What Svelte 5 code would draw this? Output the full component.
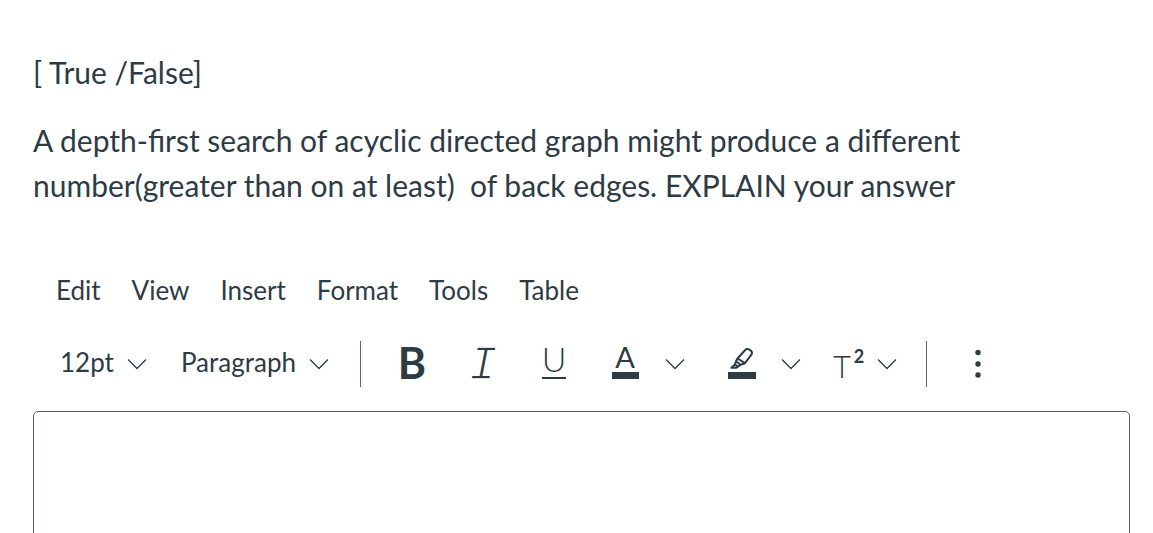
<script lang="ts">
	const menus = ['Edit', 'View', 'Insert', 'Format', 'Tools', 'Table'];
	const sizes = ['12pt', '14pt', '18pt', '24pt'];
	const blocks = ['Paragraph', 'Heading 2', 'Heading 3', 'Preformatted'];

	let size = $state('12pt');
	let block = $state('Paragraph');
	let answer = $state('');
</script>

{#snippet chevron()}
	<svg class="chevron" width="20" height="12" viewBox="0 0 20 12" aria-hidden="true">
		<path d="M1 1.5 10 10.5 19 1.5" />
	</svg>
{/snippet}

<main>
	<section class="question">
		<p>[ True /False]</p>
		<p>
			A depth-first search of acyclic directed graph might produce a different
			number(greater than on at least)&nbsp; of back edges. EXPLAIN your answer
		</p>
	</section>

	<section class="editor">
		<nav class="menubar">
			{#each menus as menu}
				<button type="button">{menu}</button>
			{/each}
		</nav>

		<div class="toolbar" role="toolbar" aria-label="Formatting">
			<div class="selects">
				<label class="picker">
					<select bind:value={size} aria-label="Font size">
						{#each sizes as option}
							<option>{option}</option>
						{/each}
					</select>
					{@render chevron()}
				</label>
				<label class="picker">
					<select bind:value={block} aria-label="Block style">
						{#each blocks as option}
							<option>{option}</option>
						{/each}
					</select>
					{@render chevron()}
				</label>
			</div>

			<span class="divider"></span>

			<div class="tools">
				<div class="group">
					<button type="button" class="tool" aria-label="Bold">
						<svg width="32" height="32" viewBox="0 0 32 32">
							<text class="bold" x="16" y="31">B</text>
						</svg>
					</button>
					<button type="button" class="tool" aria-label="Italic">
						<svg width="32" height="32" viewBox="0 0 32 32">
							<text class="italic" x="16" y="31">I</text>
						</svg>
					</button>
					<button type="button" class="tool" aria-label="Underline">
						<svg width="32" height="32" viewBox="0 0 32 32">
							<text class="under" x="16" y="24">U</text>
							<rect x="4" y="29" width="24" height="2" />
						</svg>
					</button>
					<button type="button" class="tool" aria-label="Text color">
						<svg width="32" height="32" viewBox="0 0 32 32">
							<text class="color" x="16" y="20">A</text>
							<rect x="3" y="24" width="27" height="7" />
						</svg>
					</button>
					<button type="button" class="more" aria-label="Text color options">
						{@render chevron()}
					</button>
				</div>
				<div class="group">
					<button type="button" class="tool" aria-label="Highlight">
						<svg width="32" height="32" viewBox="0 0 32 32">
							<g class="pen">
								<path
									d="M12.5 10.5 20.2 2C22.4-.2 28.4 2.4 26.6 6.4L20 15.2 15.6 16.8 11 13.2ZM12.5 10.5 20 15.2"
								/>
								<path d="M11 13.2 10 16.4 6.4 19.8H11L15.6 16.8" />
								<path d="M10 16.4 12.6 18.6" />
							</g>
							<rect x="3" y="24" width="28" height="7" />
						</svg>
					</button>
					<button type="button" class="more" aria-label="Highlight options">
						{@render chevron()}
					</button>
				</div>
				<div class="group">
					<button type="button" class="tool narrow" aria-label="Superscript">
						<svg width="32" height="32" viewBox="0 0 32 32">
							<text class="base" x="11" y="30">T</text>
							<text class="power" x="28" y="15">2</text>
						</svg>
					</button>
					<button type="button" class="more" aria-label="Superscript and subscript">
						{@render chevron()}
					</button>
				</div>
			</div>

			<span class="divider"></span>

			<button type="button" class="overflow" aria-label="More">
				<svg width="8" height="32" viewBox="0 0 8 32">
					<circle cx="4" cy="4.5" r="2.7" />
					<circle cx="4" cy="16" r="2.7" />
					<circle cx="4" cy="27" r="2.7" />
				</svg>
			</button>
		</div>

		<textarea bind:value={answer} aria-label="Answer"></textarea>
	</section>
</main>

<style>
	:global(body) {
		margin: 0;
		background: #fff;
	}

	main {
		box-sizing: border-box;
		height: 100vh;
		overflow: hidden;
		padding: 50px 23px 0 33px;
		color: #2d3b45;
		font-family: Lato, 'Liberation Sans', sans-serif;
	}

	.question {
		max-width: 960px;
		font-size: 30px;
		line-height: 45px;
	}

	p {
		margin: 0 0 23px;
	}

	button,
	select {
		margin: 0;
		padding: 0;
		border: none;
		background: none;
		color: inherit;
		cursor: pointer;
		font-family: inherit;
		font-size: 26px;
		line-height: 32px;
	}

	.menubar {
		display: flex;
		gap: 31px;
		padding: 43px 23px 0;
	}

	.toolbar {
		display: flex;
		align-items: center;
		padding: 35px 27px 24px;
	}

	.selects {
		display: flex;
		gap: 34px;
		margin-right: 31px;
	}

	.picker {
		display: grid;
		align-items: center;
	}

	.picker select,
	.picker .chevron {
		grid-area: 1 / 1;
	}

	.picker select {
		appearance: none;
		field-sizing: content;
		padding: 0 33px 4px 0;
	}

	.picker .chevron {
		justify-self: end;
		pointer-events: none;
	}

	.divider {
		width: 1px;
		height: 46px;
		background: #566775;
	}

	.tools {
		display: flex;
		gap: 17px;
		margin: 0 25px 0 16px;
	}

	.group {
		display: flex;
	}

	.tool,
	.more,
	.overflow {
		display: grid;
		place-items: center;
	}

	.tool {
		width: 71px;
	}

	.narrow {
		width: 51px;
	}

	.more {
		width: 28px;
	}

	.overflow {
		margin-left: 47px;
	}

	svg {
		display: block;
		overflow: visible;
		fill: currentColor;
	}

	.chevron,
	.pen {
		fill: none;
		stroke: currentColor;
	}

	.chevron {
		stroke-width: 1.3;
	}

	.pen {
		stroke-linejoin: round;
		stroke-width: 2;
	}

	text {
		text-anchor: middle;
	}

	.bold {
		font-size: 43px;
		font-weight: 700;
	}

	/* the white outline thins the slab strokes */
	.italic {
		font-family: 'Liberation Mono', monospace;
		font-size: 48px;
		font-style: italic;
		stroke: #fff;
		stroke-width: 1.5;
	}

	.under {
		font-size: 34px;
		font-weight: 300;
	}

	.color {
		font-size: 29px;
	}

	.base {
		font-size: 31px;
		font-weight: 300;
	}

	.power {
		font-size: 18px;
		font-weight: 700;
	}

	textarea {
		display: block;
		box-sizing: border-box;
		width: 100%;
		height: 320px;
		padding: 16px;
		border: 1px solid #56636d;
		border-radius: 5px;
		outline: none;
		background: #fff;
		color: inherit;
		font: inherit;
		resize: none;
	}
</style>
